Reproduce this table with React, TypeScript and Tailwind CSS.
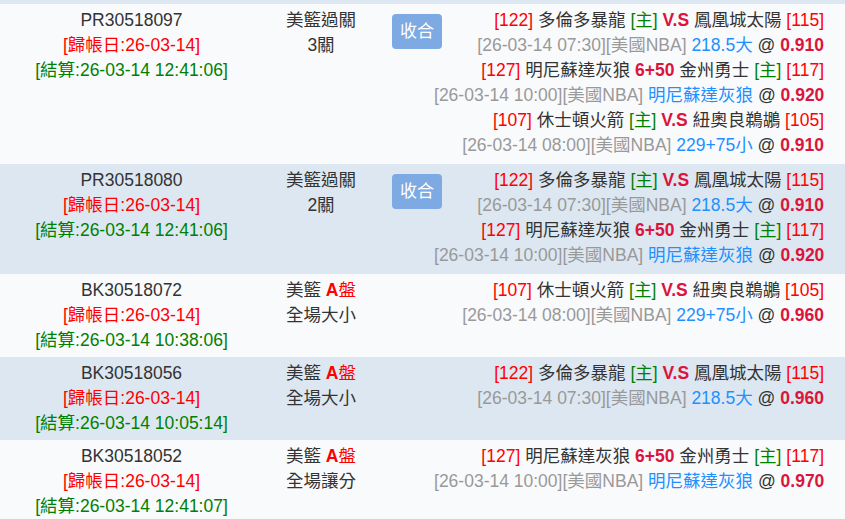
import React from 'react';

type Game = {
  home: string;
  homeNo: string;
  away: string;
  awayNo: string;
  mid: string; // "V.S" or handicap
  hostFirst: boolean; // [主] after first team
  time: string;
  pick: string;
  odds: string;
};

type Bet = {
  id: string;
  settle: string;
  kind: React.ReactNode;
  collapse?: boolean;
  games: Game[];
};

const g1 = (odds: string): Game => ({
  home: '多倫多暴龍', homeNo: '122', away: '鳳凰城太陽', awayNo: '115',
  mid: 'V.S', hostFirst: true, time: '26-03-14 07:30', pick: '218.5大', odds,
});
const g2 = (odds: string): Game => ({
  home: '明尼蘇達灰狼', homeNo: '127', away: '金州勇士', awayNo: '117',
  mid: '6+50', hostFirst: false, time: '26-03-14 10:00', pick: '明尼蘇達灰狼', odds,
});
const g3 = (odds: string): Game => ({
  home: '休士頓火箭', homeNo: '107', away: '紐奧良鵜鶘', awayNo: '105',
  mid: 'V.S', hostFirst: true, time: '26-03-14 08:00', pick: '229+75小', odds,
});

const basket = (sub: string) => (
  <>
    <div>美籃 <span className="text-[#ff0000] font-bold">A</span><span className="text-[#ff0000]">盤</span></div>
    <div>{sub}</div>
  </>
);

const bets: Bet[] = [
  {
    id: 'PR30518097', settle: '26-03-14 12:41:06', collapse: true,
    kind: (<><div>美籃過關</div><div>3關</div></>),
    games: [g1('0.910'), g2('0.920'), g3('0.910')],
  },
  {
    id: 'PR30518080', settle: '26-03-14 12:41:06', collapse: true,
    kind: (<><div>美籃過關</div><div>2關</div></>),
    games: [g1('0.910'), g2('0.920')],
  },
  { id: 'BK30518072', settle: '26-03-14 10:38:06', kind: basket('全場大小'), games: [g3('0.960')] },
  { id: 'BK30518056', settle: '26-03-14 10:05:14', kind: basket('全場大小'), games: [g1('0.960')] },
  { id: 'BK30518052', settle: '26-03-14 12:41:07', kind: basket('全場讓分'), games: [g2('0.970')] },
];

const Host = () => <span className="text-[#008000]">[主]</span>;

function GameLines({ g }: { g: Game }) {
  return (
    <>
      <div>
        <span className="text-[#ff0000]">[{g.homeNo}]</span> {g.home}{' '}
        {g.hostFirst && <><Host />{' '}</>}
        <span className="text-[#dc143c] font-bold">{g.mid}</span> {g.away}{' '}
        {!g.hostFirst && <><Host />{' '}</>}
        <span className="text-[#ff0000]">[{g.awayNo}]</span>
      </div>
      <div>
        <span className="text-[#999]">[{g.time}][美國NBA]</span>{' '}
        <span className="text-[#1e90ff]">{g.pick}</span> @{' '}
        <span className="text-[#dc143c] font-bold">{g.odds}</span>
      </div>
    </>
  );
}

export default function App() {
  return (
    <div
      className="w-[845px] h-[519px] overflow-hidden bg-[#f9fafc] text-[#333] text-[17.5px] leading-[25px]"
      style={{ fontFamily: '"Liberation Sans", "Noto Sans CJK TC", sans-serif' }}
    >
      <div className="h-[4px] bg-[#dce7f1]" />
      {bets.map((b, i) => (
        <div
          key={b.id}
          className={`flex pt-[4px] ${b.games.length > 1 ? 'pb-[6px]' : 'pb-[4px]'} ${i % 2 === 1 ? 'bg-[#dce7f1]' : 'bg-[#f9fafc]'}`}
        >
          <div className="w-[263px] shrink-0 text-center">
            <div>{b.id}</div>
            <div className="text-[#ff0000]">[歸帳日:26-03-14]</div>
            <div className="text-[#008000]">[結算:{b.settle}]</div>
          </div>
          <div className="w-[116px] shrink-0 text-center">{b.kind}</div>
          <div className="w-[55px] shrink-0 pl-[13px] pt-[6px]">
            {b.collapse && (
              <button className="w-[50px] h-[35px] rounded-[4px] bg-[#7eaae3] text-white text-[17px] leading-[35px]">
                收合
              </button>
            )}
          </div>
          <div className="flex-1 min-w-0 text-right pr-[21px] whitespace-nowrap">
            {b.games.map((g, j) => (
              <GameLines key={j} g={g} />
            ))}
          </div>
        </div>
      ))}
    </div>
  );
}
